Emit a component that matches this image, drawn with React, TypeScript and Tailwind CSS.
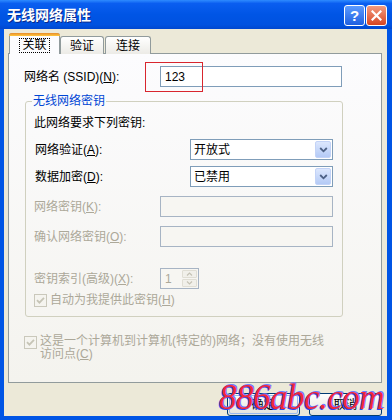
import React from 'react';

const Mn: React.FC<{ c: string }> = ({ c }) => <span className="underline underline-offset-1">{c}</span>;

const CheckBox: React.FC = () => (
  <span className="w-[13px] h-[13px] border border-[#CAC8BB] bg-[#F5F4EF] flex items-center justify-center shrink-0">
    <svg width="9" height="9" viewBox="0 0 9 9">
      <path d="M1 4.2 L3.4 6.6 L8 1.8" stroke="#C6C4B6" strokeWidth="1.8" fill="none" />
    </svg>
  </span>
);

const Select: React.FC<{ value: string }> = ({ value }) => (
  <div className="w-[143px] h-[21px] border border-[#7F9DB9] bg-white flex items-center justify-between pl-[3px] pr-[1px]">
    <span className="text-black">{value}</span>
    <span className="w-[16px] h-[17px] rounded-[2px] bg-gradient-to-b from-[#DCE7FD] to-[#B4CAF6] border border-[#C3D3F7] flex items-center justify-center">
      <svg width="9" height="6" viewBox="0 0 9 6">
        <path d="M1.2 1 L4.5 4.3 L7.8 1" stroke="#4D6185" strokeWidth="1.8" fill="none" />
      </svg>
    </span>
  </div>
);

const TextBox: React.FC<{ w: string; disabled?: boolean; children?: React.ReactNode }> = ({ w, disabled, children }) => (
  <div
    className={`${w} h-[21px] border ${disabled ? 'border-[#A7B4C4] bg-[#F7F6F2]' : 'border-[#7F9DB9] bg-white'} flex items-center px-[4px] text-black`}
  >
    {children}
  </div>
);

const XpButton: React.FC<{ children: React.ReactNode; primary?: boolean }> = ({ children, primary }) => (
  <div className="w-[73px] h-[23px] rounded-[3px] border border-[#003C74] bg-gradient-to-b from-[#FFFFFF] to-[#E3E2DA] flex items-center justify-center p-[1px]">
    <div
      className={`w-full h-full rounded-[2px] flex items-center justify-center ${primary ? 'border border-[#98B8EE]' : ''}`}
    >
      {children}
    </div>
  </div>
);

export default function App() {
  return (
    <div className="relative w-[392px] h-[420px] overflow-hidden bg-[#0055E5] flex flex-col font-['Liberation_Sans','Noto_Sans_CJK_SC',sans-serif] text-[12px] leading-[16px] text-black">
      {/* title bar */}
      <div className="h-[29px] shrink-0 flex items-center justify-between pl-[7px] pr-[5px] bg-[linear-gradient(to_bottom,#2E8BFF_0%,#0A5EF0_12%,#0055E5_50%,#0052E0_85%,#0047CF_100%)]">
        <span className="text-white font-bold text-[14px] [text-shadow:1px_1px_0_#0A2A8A]">无线网络属性</span>
        <div className="flex items-center gap-[1px] mt-[1px]">
          <div className="w-[21px] h-[21px] rounded-[3px] border border-white bg-gradient-to-b from-[#5C9BFF] to-[#1E5FE0] flex items-center justify-center text-white font-bold text-[15px] leading-none">
            ?
          </div>
          <div className="w-[21px] h-[21px] rounded-[3px] border border-white bg-gradient-to-b from-[#F29A7E] to-[#D6431E] flex items-center justify-center">
            <svg width="11" height="11" viewBox="0 0 11 11">
              <path d="M1.5 1.5 L9.5 9.5 M9.5 1.5 L1.5 9.5" stroke="white" strokeWidth="2.2" strokeLinecap="square" />
            </svg>
          </div>
        </div>
      </div>

      {/* body */}
      <div className="ml-[4px] w-[383px] h-[387px] bg-[#ECE9D8] flex flex-col pt-[4px]">
        {/* tabs */}
        <div className="flex items-start pl-[5px] h-[21px] relative z-10">
          <div className="w-[51px] h-[21px] border border-b-0 border-[#919B9C] rounded-t-[3px] bg-[#FCFCFE] flex flex-col">
            <div className="h-[3px] -mx-[1px] -mt-[1px] rounded-t-[3px] bg-gradient-to-b from-[#E68B2C] to-[#FFC73C]" />
            <div className="flex-1 flex items-center justify-center">
              <span className="border border-dotted border-black px-[2px] leading-[13px]">关联</span>
            </div>
          </div>
          <div className="w-[44px] h-[18px] mt-[3px] border border-b-0 border-[#919B9C] rounded-t-[3px] bg-gradient-to-b from-[#FFFFFF] to-[#ECEBE6] flex items-center justify-center">
            验证
          </div>
          <div className="w-[46px] h-[18px] mt-[3px] ml-[1px] border border-b-0 border-[#919B9C] rounded-t-[3px] bg-gradient-to-b from-[#FFFFFF] to-[#ECEBE6] flex items-center justify-center">
            连接
          </div>
        </div>

        {/* panel */}
        <div className="ml-[4px] -mt-[1px] w-[374px] h-[330px] border border-[#919B9C] bg-gradient-to-b from-[#FCFCFE] to-[#F4F3EE] flex flex-col">
          <div className="relative mt-[12px] h-[21px] flex items-center">
            <span className="pl-[15px] w-[151px]">
              网络名 (SSID)(<Mn c="N" />):
            </span>
            <TextBox w="w-[182px]">123</TextBox>
            <div className="absolute left-[136px] -top-[4px] w-[58px] h-[30px] border border-[#D8262E]" />
          </div>

          <fieldset className="mt-[6px] ml-[16px] w-[318px] h-[224px] border border-[#D0D0BF] rounded-[3px]">
            <legend className="ml-[6px] px-[1px] text-[#0046D5] leading-[16px]">无线网络密钥</legend>
            <div className="pl-[8px] flex flex-col">
              <div className="mt-[6px]">此网络要求下列密钥:</div>

              <div className="mt-[8px] h-[21px] flex items-center">
                <span className="w-[156px] pl-[1px]">
                  网络验证(<Mn c="A" />):
                </span>
                <Select value="开放式" />
              </div>
              <div className="mt-[6px] h-[21px] flex items-center">
                <span className="w-[156px] pl-[1px]">
                  数据加密(<Mn c="D" />):
                </span>
                <Select value="已禁用" />
              </div>

              <div className="mt-[9px] h-[21px] flex items-center text-[#ACA899]">
                <span className="w-[126px]">
                  网络密钥(<Mn c="K" />):
                </span>
                <TextBox w="w-[173px]" disabled />
              </div>
              <div className="mt-[9px] h-[21px] flex items-center text-[#ACA899]">
                <span className="w-[126px]">
                  确认网络密钥(<Mn c="O" />):
                </span>
                <TextBox w="w-[173px]" disabled />
              </div>

              <div className="mt-[21px] h-[21px] flex items-center text-[#ACA899]">
                <span className="w-[126px]">
                  密钥索引(高级)(<Mn c="X" />):
                </span>
                <div className="w-[39px] h-[21px] border border-[#A7B4C4] bg-[#F7F6F2] flex items-center justify-between pl-[4px] pr-[1px]">
                  <span>1</span>
                  <div className="flex flex-col gap-[1px]">
                    <span className="w-[15px] h-[8px] rounded-[1px] border border-[#E0DED4] bg-[#F1F0EA] flex items-center justify-center">
                      <svg width="7" height="4" viewBox="0 0 7 4">
                        <path d="M1 3.5 L3.5 1 L6 3.5" stroke="#C5C2B5" strokeWidth="1.2" fill="none" />
                      </svg>
                    </span>
                    <span className="w-[15px] h-[8px] rounded-[1px] border border-[#E0DED4] bg-[#F1F0EA] flex items-center justify-center">
                      <svg width="7" height="4" viewBox="0 0 7 4">
                        <path d="M1 0.5 L3.5 3 L6 0.5" stroke="#C5C2B5" strokeWidth="1.2" fill="none" />
                      </svg>
                    </span>
                  </div>
                </div>
              </div>

              <div className="mt-[4px] h-[14px] flex items-center gap-[3px] text-[#ACA899]">
                <CheckBox />
                <span>
                  自动为我提供此密钥(<Mn c="H" />)
                </span>
              </div>
            </div>
          </fieldset>

          <div className="mt-[19px] pl-[15px] flex items-start gap-[3px] text-[#ACA899]">
            <CheckBox />
            <span className="leading-[13px] -mt-[1px]">
              这是一个计算机到计算机(特定的)网络；没有使用无线
              <br />
              访问点(<Mn c="C" />)
            </span>
          </div>
        </div>

        {/* buttons */}
        <div className="mt-[10px] flex justify-end gap-[9px] pr-[5px]">
          <XpButton primary>确定</XpButton>
          <XpButton>取消</XpButton>
        </div>
      </div>

      {/* watermark */}
      <div className="absolute left-[219px] top-[378px] font-['Liberation_Serif',serif] italic text-[35px] leading-[40px] text-[#F0283C] [text-shadow:-1px_1px_0_#3344EE,1px_-1px_0_#6E7BFF] tracking-[-0.5px] pointer-events-none">
        886abc.com
      </div>
    </div>
  );
}
